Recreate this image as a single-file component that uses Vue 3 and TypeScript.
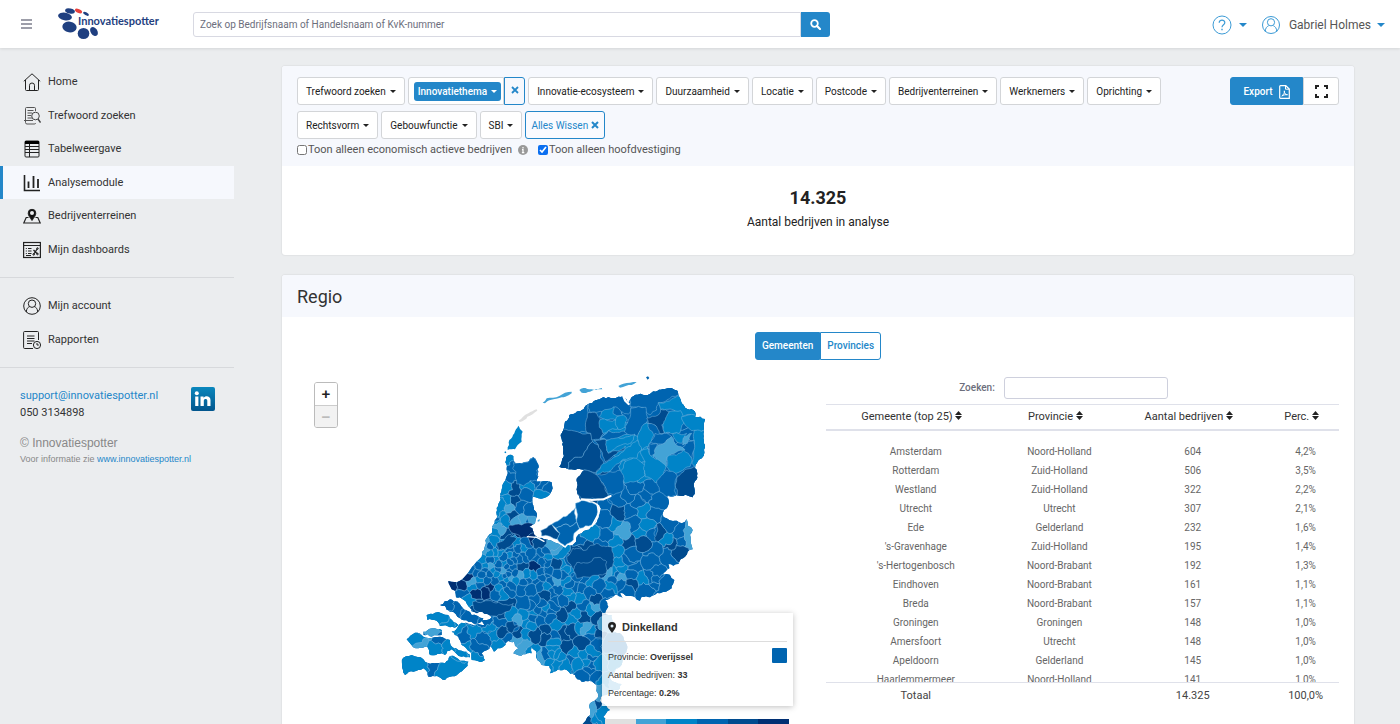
<script setup lang="ts">
import { ref, computed } from 'vue'

type Point = [number, number]
interface Shape { d: string; fill: string }

const palette = ['#e0e0e0', '#43a3d6', '#0084c8', '#0064b0', '#004b8f', '#002f73']

const navMain = [
  { icon: 'home', label: 'Home' },
  { icon: 'search', label: 'Trefwoord zoeken' },
  { icon: 'table', label: 'Tabelweergave' },
  { icon: 'chart', label: 'Analysemodule' },
  { icon: 'pin', label: 'Bedrijventerreinen' },
  { icon: 'board', label: 'Mijn dashboards' },
]
const navAccount = [
  { icon: 'user', label: 'Mijn account' },
  { icon: 'report', label: 'Rapporten' },
]
const filtersAfter = [
  'Innovatie-ecosysteem', 'Duurzaamheid', 'Locatie', 'Postcode', 'Bedrijventerreinen',
  'Werknemers', 'Oprichting', 'Rechtsvorm', 'Gebouwfunctie', 'SBI',
]
const columns = ['Gemeente (top 25)', 'Provincie', 'Aantal bedrijven', 'Perc.']
const allRows = [
  ['Amsterdam', 'Noord-Holland', '604', '4,2%'],
  ['Rotterdam', 'Zuid-Holland', '506', '3,5%'],
  ['Westland', 'Zuid-Holland', '322', '2,2%'],
  ['Utrecht', 'Utrecht', '307', '2,1%'],
  ['Ede', 'Gelderland', '232', '1,6%'],
  ["'s-Gravenhage", 'Zuid-Holland', '195', '1,4%'],
  ["'s-Hertogenbosch", 'Noord-Brabant', '192', '1,3%'],
  ['Eindhoven', 'Noord-Brabant', '161', '1,1%'],
  ['Breda', 'Noord-Brabant', '157', '1,1%'],
  ['Groningen', 'Groningen', '148', '1,0%'],
  ['Amersfoort', 'Utrecht', '148', '1,0%'],
  ['Apeldoorn', 'Gelderland', '145', '1,0%'],
  ['Haarlemmermeer', 'Noord-Holland', '141', '1,0%'],
]

const query = ref('')
const tableQuery = ref('')
const onlyActive = ref(false)
const onlyMain = ref(true)
const rows = computed(() => {
  const q = tableQuery.value.toLowerCase()
  return allRows.filter(r => r[0].toLowerCase().includes(q) || r[1].toLowerCase().includes(q))
})

function parse(s: string): Point[] {
  return s.trim().split(/\s+/).map(p => p.split(',').map(Number) as Point)
}

// Deterministic noise, equal for both municipalities that share an edge.
function noise(a: Point, b: Point): number {
  const v = Math.sin((a[0] + b[0]) * 12.9898 + (a[1] + b[1]) * 78.233) * 43758.5453
  return v - Math.floor(v) - 0.5
}
function roughEdge(a: Point, b: Point, amount: number, out: Point[]): void {
  const len = Math.hypot(b[0] - a[0], b[1] - a[1])
  if (len < 11) { out.push(b); return }
  const flip = a[0] < b[0] || (a[0] === b[0] && a[1] < b[1]) ? 1 : -1
  const n = noise(a, b) * amount * flip
  const mid: Point = [
    Math.round((a[0] + b[0]) / 2 - (b[1] - a[1]) * n),
    Math.round((a[1] + b[1]) / 2 + (b[0] - a[0]) * n),
  ]
  roughEdge(a, mid, amount, out)
  roughEdge(mid, b, amount, out)
}
function roughPath(pts: Point[], amount: number): string {
  const out: Point[] = []
  pts.forEach((p, i) => roughEdge(p, pts[(i + 1) % pts.length], amount, out))
  return 'M' + out.map(p => p.join(' ')).join('L') + 'Z'
}

function cellAround(site: Point, sites: Point[]): Point[] {
  let poly: Point[] = [[0, 0], [1000, 0], [1000, 1230], [0, 1230]]
  for (const o of sites) {
    if (o === site) continue
    const nx = o[0] - site[0]
    const ny = o[1] - site[1]
    const c = (o[0] * o[0] + o[1] * o[1] - site[0] * site[0] - site[1] * site[1]) / 2
    const side = (p: Point) => p[0] * nx + p[1] * ny - c
    const next: Point[] = []
    poly.forEach((p, i) => {
      const q = poly[(i + 1) % poly.length]
      const sp = side(p)
      const sq = side(q)
      if (sp <= 0) next.push(p)
      if ((sp < 0 && sq > 0) || (sp > 0 && sq < 0)) {
        const t = sp / (sp - sq)
        next.push([p[0] + (q[0] - p[0]) * t, p[1] + (q[1] - p[1]) * t])
      }
    })
    poly = next
  }
  return poly.map(p => [Math.round(p[0]), Math.round(p[1])] as Point)
}

const land = [
  '356,255 370,258 374,278 395,280 430,262 447,290 445,320 440,335 485,337 488,355 478,375 460,385 445,385 428,380 432,410 440,440 435,460 418,470 430,485 440,500 470,508 490,515 520,532 548,525 560,500 590,480 622,450 628,405 612,398 575,392 562,372 565,320 583,300 545,298 508,290 515,275 520,240 512,195 520,180 525,155 560,125 595,102 640,82 700,78 715,98 725,82 780,72 825,57 862,62 865,75 875,100 915,125 915,140 945,147 942,180 945,230 935,265 915,295 908,382 860,375 828,380 835,405 820,440 860,452 875,460 890,448 908,480 902,510 908,538 885,560 865,582 835,582 838,595 818,610 853,630 845,655 828,665 810,670 780,682 755,680 750,692 735,682 710,678 690,670 698,685 675,675 660,685 645,690 655,710 645,730 665,735 665,780 700,800 710,840 690,890 660,925 695,942 690,955 650,975 632,980 635,1000 660,1020 640,1040 645,1070 650,1110 600,1130 560,1110 570,1065 600,1035 600,1000 625,980 620,945 575,935 555,915 530,900 480,910 478,888 455,885 440,850 425,830 425,850 400,853 370,850 385,835 372,815 350,815 338,832 312,845 302,828 275,850 285,870 245,870 240,845 215,825 205,800 185,785 215,758 240,762 283,765 275,752 305,742 245,724 232,704 198,682 195,662 185,658 175,633 210,632 220,625 275,560 283,540 305,490 322,440 332,390 340,340 350,300',
  '150,705 180,688 215,710 245,735 280,745 270,758 235,755 210,745 180,725 165,708',
  '110,735 135,728 175,735 190,755 205,765 180,772 150,768 140,752 112,750',
  '100,785 155,780 155,795 125,800 100,795',
  '50,808 75,788 100,800 120,805 150,800 180,810 182,826 215,842 240,854 240,862 215,860 185,838 165,855 120,855 112,830 85,835 60,820',
  '35,870 65,855 100,868 115,880 165,880 180,858 210,872 235,875 225,895 180,920 165,930 115,920 100,895 70,905 45,915 37,895',
]
const landPaths = land.map(s => roughPath(parse(s), 0.35))

const siteList = `690,385,3 740,350,3 780,350,3 715,375,3 765,375,3 800,395,3 745,395,3 640,410,3 685,425,4 720,425,3
760,420,2 795,430,3 650,450,3 668,460,2 695,485,1 730,460,3 770,470,2 755,490,2 785,490,3 814,490,4 840,470,3 865,490,3
830,505,2 845,520,4 870,515,3 899,512,1 865,540,4 835,560,3 605,495,2 645,495,3 575,500,3 630,525,3 680,540,2 678,515,2
715,520,4 760,515,4 725,550,3 790,540,3 590,530,4 620,560,4 560,555,4 600,590,4 640,600,4 650,560,4 580,600,4 540,575,3
690,580,2 715,570,3 730,600,3 785,580,3 670,610,2 690,625,1 655,610,1 780,620,3 800,625,3 725,642,4 690,640,3 760,660,3
795,655,3 830,640,3 710,660,3 660,650,2 650,670,3 505,550,2 480,530,1 455,550,3 450,520,4 440,565,3 468,560,2 490,535,1
500,580,4 530,600,2 520,580,2 545,605,2 435,593,5 395,590,4 455,610,3 470,620,3 500,615,3 495,632,1 390,617,1 410,615,2
375,630,2 440,640,3 400,650,3 350,660,3 340,640,3 465,675,4 500,660,3 540,640,3 580,625,3 605,635,2 625,650,3 570,655,3
540,680,2 570,685,2 600,670,3 620,690,4 615,710,1 645,705,3 520,690,3 300,710,4 260,705,4 350,705,4 400,700,3 450,700,3
490,710,3 540,712,4 580,705,3 365,290,3 410,300,3 345,350,2 362,265,2 355,320,3 375,360,4 410,350,2 430,335,3 460,345,3
472,360,3 455,378,2 405,375,3 375,395,4 350,395,2 355,412,1 335,410,2 330,430,2 395,410,3 420,420,3 365,440,4 400,455,1
425,455,1 385,458,1 345,450,2 330,460,2 395,480,5 350,500,4 325,480,1 315,490,2 375,520,2 360,540,3 330,530,3 310,520,2
300,550,2 290,540,1 280,570,2 300,590,1 285,590,2 265,590,3 315,570,2 340,560,3 370,570,3 350,590,3 320,610,2 300,610,3
235,620,5 215,645,5 190,640,5 250,650,2 270,630,2 300,650,5 285,665,5 260,670,5 275,615,3 290,630,3 245,637,1 220,675,3
240,690,2 410,520,3 430,508,5 400,535,2 420,550,3 400,560,3 365,735,2 335,730,4 400,740,2 430,730,2 410,760,2 385,750,1
330,755,3 290,755,3 250,780,2 220,790,3 280,810,3 315,790,2 300,770,2 340,790,4 370,770,4 385,785,4 350,805,3 330,825,2
380,815,1 400,830,1 410,790,2 435,790,4 465,785,4 450,750,3 480,740,3 515,735,4 545,745,2 580,740,4 500,765,2 470,803,4
490,815,2 520,790,4 550,780,4 585,775,1 600,800,3 575,820,4 530,835,4 490,840,2 550,850,2 510,860,2 455,860,1 480,880,2
530,880,2 560,880,2 600,860,3 630,790,4 625,740,4 625,820,3 600,900,3 580,920,3 620,920,3 650,760,1 660,820,3 670,870,2
640,930,2 690,940,1 630,970,1 620,1000,4 640,1020,2 600,1030,1 620,1045,2 590,1052,4 610,1080,3 230,840,2 265,830,3
260,860,2 205,775,2 80,810,2 90,825,1 130,785,1 150,808,3 140,832,2 170,830,2 210,850,2 70,880,2 140,900,3 200,880,2
150,740,2 170,765,2 200,720,3 240,740,3 165,700,3 540,150,3 620,100,3 770,90,3 800,210,3 740,230,2 830,340,3 660,330,3
740,320,2 620,350,4 600,380,4`
const sites = siteList.trim().split(/\s+/).map(s => s.split(',').map(Number))

// Small municipalities of the Randstad and the river area.
const fillers: [number, number, number, number, number, number[]][] = [
  [280, 520, 110, 110, 22, [3, 2, 3, 3, 2, 1]],
  [240, 590, 120, 80, 12, [3, 2, 3, 3]],
  [390, 540, 170, 130, 18, [3, 3, 2, 3, 3]],
  [400, 690, 240, 60, 10, [3, 2, 3]],
  [400, 760, 230, 140, 16, [2, 3, 2, 2]],
  [640, 590, 180, 70, 6, [3, 3, 2]],
]
let seed = 41
const rnd = () => { seed = (seed * 16807) % 2147483647; return seed / 2147483647 }
for (const [x, y, w, h, n, shades] of fillers) {
  let placed = 0
  for (let tries = 0; tries < 400 && placed < n; tries++) {
    const px = Math.round(x + rnd() * w)
    const py = Math.round(y + rnd() * h)
    const gap = Math.min(...sites.map(s => Math.hypot(s[0] - px, s[1] - py) - (s[2] > 3 ? 11 : 0)))
    if (gap > 11) {
      sites.push([px, py, shades[placed % shades.length]])
      placed++
    }
  }
}
const sitePoints = sites.map(s => [s[0], s[1]] as Point)
const cells: Shape[] = sitePoints.map((p, i) => ({
  d: roughPath(cellAround(p, sitePoints), 0.55),
  fill: palette[sites[i][2]],
}))

const northList: [number, string][] = [
  [3, '500,150 560,120 595,95 597,150 590,187 560,188 520,180'],
  [3, '595,95 640,72 700,70 725,110 715,132 675,110 640,125 600,127'],
  [4, '500,180 570,188 602,190 608,215 575,262 555,262 535,278 532,305 500,300'],
  [4, '608,215 632,240 642,280 617,308 585,300 532,300 535,278 555,262 575,262'],
  [4, '595,127 620,130 632,165 640,190 628,208 605,210 602,190 590,187'],
  [4, '612,212 648,208 655,250 706,228 700,242 645,275 632,240'],
  [2, '635,125 672,110 670,132 690,138 678,150 645,150 628,140'],
  [2, '632,148 678,150 682,178 655,182 640,190 628,172'],
  [2, '680,140 700,135 712,150 705,172 684,178 676,155'],
  [3, '710,60 780,62 825,47 872,55 865,75 830,90 805,98 800,120 780,135 760,112 720,110'],
  [3, '722,115 768,112 775,150 755,175 745,200 702,190 715,150'],
  [4, '770,145 805,135 812,118 838,125 832,150 815,165 822,190 808,190 795,165 775,160'],
  [2, '805,98 865,75 880,95 925,120 920,138 875,140 855,122 812,118'],
  [2, '838,125 872,122 882,160 870,188 825,190 818,165'],
  [2, '875,140 915,135 955,140 950,180 905,182 885,165'],
  [2, '912,182 955,180 955,230 945,270 915,300 905,280 912,230'],
  [3, '875,235 890,215 912,210 912,240 905,265'],
  [2, '848,190 890,190 880,205 875,220 860,215'],
  [1, '880,205 905,190 892,220 878,225'],
  [3, '795,190 822,190 845,200 820,222 803,222 778,215'],
  [1, '790,255 805,225 845,200 885,240 832,260 828,290 805,275'],
  [2, '832,260 880,240 905,265 900,290 870,305 845,310 830,290'],
  [4, '862,320 912,290 925,300 918,390 862,376 855,345'],
  [2, '755,170 772,158 792,195 775,230 755,240 742,205'],
  [3, '778,220 803,222 795,250 775,262'],
  [3, '632,205 655,182 700,183 712,192 680,207 650,210'],
  [2, '648,212 690,205 735,192 730,210 655,248 650,235'],
  [2, '617,312 640,280 700,245 742,210 755,240 738,268 700,268 660,303'],
  [2, '690,310 705,275 740,265 768,285 765,315 705,340'],
  [2, '765,275 750,245 775,235 785,260 828,290 820,320 795,338 765,320'],
  [3, '800,340 828,300 862,318 855,345 860,378 828,380 808,365'],
  [3, '617,313 660,305 690,300 700,335 702,355 670,375 652,372 645,350'],
  [4, '560,320 583,300 615,312 645,350 655,378 640,392 575,390 555,365'],
]
const centreList: [number, string][] = [
  [3, '370,278 395,280 430,262 447,290 447,335 420,332 400,348 380,342 378,305 368,295'],
  [4, '350,498 372,482 362,500 380,505 360,530 325,542 320,520 340,512'],
  [5, '358,465 432,465 440,478 420,492 412,503 392,505 378,492 362,485'],
  [4, '548,535 590,540 620,520 665,530 672,575 655,600 600,600 560,610 545,590 530,560'],
  [4, '560,578 610,565 650,575 648,610 600,622 560,625 550,600'],
  [4, '248,695 310,697 370,700 350,725 300,738 255,722'],
]
const toShape = (rough: number) => ([c, s]: [number, string]): Shape => ({ d: roughPath(parse(s), rough), fill: palette[c] })
const north = northList.map(toShape(0.28))
const centre = centreList.map(toShape(0.4))

const polderList: [number, string][] = [
  [4, '452,482 485,463 510,490 502,507 455,498'],
  [3, '485,463 520,440 557,412 560,455 540,470 528,462 498,475'],
  [3, '557,400 575,392 600,398 622,408 622,440 605,465 570,475 560,455'],
  [3, '498,475 528,462 540,470 560,457 568,476 552,490 550,510 525,528 502,507 510,490'],
]
const polder = polderList.map(toShape(0.22))
const polderEdge = roughPath(parse('452,482 485,463 520,440 557,400 575,392 600,398 622,408 622,440 605,465 568,476 552,490 550,510 525,528 502,507 455,498'), 0.22)

const islandList: [number, string][] = [
  [2, '385,167 398,185 395,215 375,238 353,240 358,210'],
  [0, '385,152 415,130 440,118 442,122 412,140 390,156'],
  [1, '458,98 470,85 545,65 545,70 505,85 465,100'],
  [1, '568,60 580,54 605,58 635,54 637,58 600,65 575,68'],
  [1, '685,48 700,41 740,36 725,45 690,53'],
  [3, '768,22 774,19 778,24 773,29'],
  [2, '343,246 347,244 349,248 345,250'],
  [1, '443,450 450,448 448,454 443,455'],
]
const islands = islandList.map(toShape(0.25))
</script>

<template>
  <div class="app">
    <header class="topbar">
      <button class="plain burger" aria-label="Menu">
        <svg width="11" height="10" viewBox="0 0 11 10"><path d="M0 1h11M0 5h11M0 9h11" stroke="#7d7f8d" stroke-width="1.4" /></svg>
      </button>
      <a class="logo" href="#" aria-label="Innovatiespotter">
        <svg width="120" height="34" viewBox="0 0 120 34">
          <g fill="#1f3f80">
            <ellipse cx="8" cy="9.5" rx="7" ry="3.8" transform="rotate(10 8 9.500)" />
            <ellipse cx="13" cy="4" rx="5" ry="2.500" transform="rotate(12 13 4)" />
            <ellipse cx="29" cy="6.800" rx="3.200" ry="1.500" transform="rotate(28 29 6.800)" />
            <ellipse cx="12.500" cy="20" rx="7.200" ry="5.400" transform="rotate(8 12.500 20)" />
            <ellipse cx="26.500" cy="26.500" rx="5.800" ry="5.600" />
            <ellipse cx="37" cy="24.500" rx="4.900" ry="3.300" transform="rotate(55 37 24.500)" />
          </g>
          <ellipse cx="21.500" cy="4" rx="3.800" ry="1.800" fill="#e8413c" transform="rotate(24 21.500 4)" />
          <text x="21" y="18" class="logo-text">Innovatiespotter</text>
        </svg>
      </a>
      <form class="search" @submit.prevent>
        <input v-model="query" type="text" aria-label="Zoeken" placeholder="Zoek op Bedrijfsnaam of Handelsnaam of KvK-nummer">
        <button aria-label="Zoek">
          <svg width="11" height="11" viewBox="0 0 11 11" fill="none" stroke="#fff"><circle cx="4.500" cy="4.500" r="3.300" stroke-width="1.800" /><path d="M7 7l3 3" stroke-width="2.200" stroke-linecap="round" /></svg>
        </button>
      </form>
      <div class="account">
        <button class="plain" aria-label="Help">
          <svg width="20" height="20" viewBox="0 0 20 20" fill="none" stroke="#3c9bd6"><circle cx="10" cy="10" r="9" /><path d="M7.200 7.800c0-3.600 5.600-3.600 5.600 0 0 2-2.800 2-2.800 4.400" stroke-width="1.200" /><path d="M10 13.800v1.400" stroke-width="1.400" /></svg>
          <span class="caret blue"></span>
        </button>
        <button class="plain user">
          <svg width="20" height="20" viewBox="0 0 20 20" fill="none" stroke="#3c9bd6"><circle cx="10" cy="10" r="8.500" /><circle cx="10" cy="7.300" r="3.600" /><path d="M4.200 16.600c.2-3.600 1.600-5 3.400-5.800M15.800 16.600c-.2-3.600-1.600-5-3.400-5.800" /></svg>
          <span class="name">Gabriel Holmes</span>
          <span class="caret blue"></span>
        </button>
      </div>
    </header>

    <div class="shell">
      <aside class="sidebar">
        <nav v-for="(group, g) in [navMain, navAccount]" :key="g">
          <a v-for="item in group" :key="item.label" href="#" :class="{ active: item.label === 'Analysemodule' }">
            <svg width="18" height="18" viewBox="0 0 18 18" fill="none" stroke="#222" stroke-width="1">
              <template v-if="item.icon === 'home'">
                <path d="M.8 8.300 9 .8l8.200 7.500M2.500 7v9.500q0 1 1 1h11q1 0 1-1V7" /><path d="M6.500 17.300v-5q0-2.300 2.500-2.300t2.500 2.300v5" />
              </template>
              <template v-else-if="item.icon === 'search'">
                <path d="M12.500 4V1.500q0-1-1-1h-8q-1 0-1 1v14q0 1.500 1.500 1.500h7.500q1 0 1-1M4.500 3.500h6M4.500 6H9M4.500 8.500H8M4.500 11H9M1 13.500h9" stroke="#555" /><circle cx="12.500" cy="9" r="3.800" stroke="#444" /><path d="M15 12l2.500 3.500" stroke="#444" stroke-width="1.400" />
              </template>
              <template v-else-if="item.icon === 'table'">
                <rect x="2" y="1" width="14" height="16" rx="1" /><path d="M2 2.500h14" stroke-width="3" stroke="#000" /><path d="M2 6.500h14M2 9.500h14M2 12.500h14M6.500 4v13" />
              </template>
              <template v-else-if="item.icon === 'chart'">
                <path d="M1.500 1v15.500H17" stroke-width="1.600" /><path d="M5.500 7.500v6.500M10.500 2v12M15 5v9" stroke-width="1.800" />
              </template>
              <template v-else-if="item.icon === 'pin'">
                <path d="M5.500 10.500H3.200L.8 16h16.400l-2.400-5.500h-2.300" stroke-width="1.200" /><path d="M9 13.500C7 10.500 5.200 8.500 5.200 6.100a3.800 3.800 0 0 1 7.600 0C12.800 8.500 11 10.500 9 13.500z" fill="#111" /><circle cx="9" cy="6" r="2" fill="#ebedef" stroke="none" />
              </template>
              <template v-else-if="item.icon === 'board'">
                <rect x=".6" y="1.500" width="16.800" height="15" stroke-width="1.200" /><path d="M.6 4.500h16.800" /><path d="M2.800 7.500h1M2.800 10h1M2.800 12.500h1M5 7.500h3.500M5 10h3.500M5 12.500h3.500M3 14.500h5" stroke-width="1.200" /><path d="M10.500 13.500l4-6M10.500 9l4 4" stroke-width="1.300" /><circle cx="14.500" cy="7.500" r=".8" /><circle cx="10.700" cy="13.400" r=".8" /><circle cx="14.500" cy="13" r=".8" />
              </template>
              <template v-else-if="item.icon === 'user'">
                <circle cx="9" cy="9" r="8.300" /><circle cx="9" cy="6.700" r="3.700" /><path d="M3.300 15c.2-3.500 1.500-4.500 3.300-5.400M14.700 15c-.2-3.500-1.500-4.500-3.300-5.400" />
              </template>
              <template v-else>
                <path d="M15.500 9V1.500q0-1-1-1H1.600q-1 0-1 1v15q0 1 1 1H10" /><path d="M4 5h7.500M4 7.500h7.500M4 10h7.500M4 12.500h5" /><circle cx="14" cy="14" r="3.600" /><path d="M14 12v2h1.800" />
              </template>
            </svg>
            <span>{{ item.label }}</span>
          </a>
        </nav>
        <div class="contact">
          <div>
            <a href="#">support@innovatiespotter.nl</a>
            <p>050 3134898</p>
          </div>
          <a class="linkedin" href="#" aria-label="LinkedIn">
            <svg width="24" height="24" viewBox="0 0 24 24">
              <defs><linearGradient id="li" x2="0" y2="1"><stop stop-color="#0a87bd" /><stop offset="1" stop-color="#01558d" /></linearGradient></defs>
              <rect width="24" height="24" rx="2" fill="url(#li)" /><circle cx="5.800" cy="6.300" r="2" fill="#fff" /><path d="M4.200 9.500h3.200V19H4.200zM9.500 9.500h3v1.300c1.800-2.600 7-2 7 2.200v6h-3.200v-5.200c0-2.600-3.500-2.500-3.500 0V19H9.500z" fill="#fff" />
            </svg>
          </a>
        </div>
        <div class="copyright">
          <p>© Innovatiespotter</p>
          <small>Voor informatie zie <a href="#">www.innovatiespotter.nl</a></small>
        </div>
      </aside>

      <main>
        <section class="card">
          <div class="filterbar">
            <div class="filters">
              <button class="btn">Trefwoord zoeken<span class="caret"></span></button>
              <div class="split">
                <button class="btn theme"><span class="pill">Innovatiethema<span class="caret"></span></span></button>
                <button class="btn clear" aria-label="Wis innovatiethema">
                  <svg width="8" height="8" viewBox="0 0 8 8"><path d="M1 1l6 6M7 1l-6 6" stroke="#2487c9" stroke-width="1.800" /></svg>
                </button>
              </div>
              <button v-for="f in filtersAfter" :key="f" class="btn">{{ f }}<span class="caret"></span></button>
              <button class="btn wipe">Alles Wissen
                <svg width="8" height="8" viewBox="0 0 8 8"><path d="M1 1l6 6M7 1l-6 6" stroke="#2487c9" stroke-width="2" /></svg>
              </button>
            </div>
            <div class="tools">
              <button class="btn export">Export
                <svg width="11" height="14" viewBox="0 0 11 14" fill="none" stroke="#fff"><path d="M1.500.7h5.300L10.300 4v9.300H1.500q-.8 0-.8-.8V1.500q0-.8.8-.8z" stroke-width="1.200" /><path d="M6.500 1v3.200H10M2.800 11c2-1.500 3-3.500 2.500-5.200 0 3 1.500 4 3.200 3.900-2-.2-4 .3-5.700 1.300" /></svg>
              </button>
              <button class="btn full" aria-label="Volledig scherm">
                <svg width="13" height="13" viewBox="0 0 13 13"><path d="M1 4V1h3M9 1h3v3M12 9v3H9M4 12H1V9" fill="none" stroke="#222" stroke-width="2" /></svg>
              </button>
            </div>
          </div>
          <div class="checks">
            <label><input v-model="onlyActive" type="checkbox">Toon alleen economisch actieve bedrijven</label>
            <svg width="10" height="10" viewBox="0 0 10 10"><circle cx="5" cy="5" r="5" fill="#999" /><path d="M5 2v1.400M4 4.700h1v2.800M3.900 7.600h2.400" stroke="#fff" stroke-width="1.200" fill="none" /></svg>
            <label><input v-model="onlyMain" type="checkbox">Toon alleen hoofdvestiging</label>
          </div>
          <div class="total">
            <strong>14.325</strong>
            <span>Aantal bedrijven in analyse</span>
          </div>
        </section>

        <section class="card region">
          <h2>Regio</h2>
          <div class="toggle">
            <button class="on">Gemeenten</button><button>Provincies</button>
          </div>
          <div class="columns">
            <div class="map">
              <svg class="land" viewBox="-279 18 1539 1200">
                <defs>
                  <clipPath id="coast"><path v-for="(d, i) in landPaths" :key="i" :d="d" /></clipPath>
                </defs>
                <g clip-path="url(#coast)" stroke="#7ab8e0" stroke-width="1.500" stroke-linejoin="round">
                  <rect width="1000" height="1230" :fill="palette[3]" />
                  <path v-for="(c, i) in cells" :key="'c' + i" :d="c.d" :fill="c.fill" />
                  <path v-for="(c, i) in centre" :key="'m' + i" :d="c.d" :fill="c.fill" />
                  <path v-for="(c, i) in north" :key="'n' + i" :d="c.d" :fill="c.fill" />
                </g>
                <path :d="polderEdge" fill="#fff" stroke="#fff" stroke-width="9" />
                <g stroke="#7ab8e0" stroke-width="1.500">
                  <path v-for="(c, i) in polder" :key="'p' + i" :d="c.d" :fill="c.fill" />
                </g>
                <g stroke="none">
                  <path v-for="(c, i) in islands" :key="'i' + i" :d="c.d" :fill="c.fill" />
                </g>
                <g fill="none" stroke="#fff" stroke-linecap="round" stroke-linejoin="round">
                  <path d="M575 388 L605 390 L640 388 L662 378" stroke-width="6" />
                  <path d="M622 404 L626 430 L606 468" stroke-width="5" />
                  <path d="M700 78 L706 92 L716 102" stroke-width="7" />
                  <path d="M412 500 L440 502 L462 514" stroke-width="4" />
                </g>
              </svg>
              <div class="zoom">
                <button aria-label="Inzoomen">+</button>
                <button aria-label="Uitzoomen" disabled>−</button>
              </div>
              <div class="legend">
                <span v-for="c in palette" :key="c" :style="{ background: c }"></span>
              </div>
              <div class="tip">
                <h3>
                  <svg width="8" height="11" viewBox="0 0 8 11"><path fill-rule="evenodd" d="M4 11C2 8 0 6.200 0 4a4 4 0 0 1 8 0c0 2.200-2 4-4 7zM4 2.500a1.500 1.500 0 1 0 0 3 1.500 1.500 0 0 0 0-3z" fill="#222" /></svg>
                  Dinkelland
                </h3>
                <div class="tip-body">
                  <div>
                    <p>Provincie: <b>Overijssel</b></p>
                    <p>Aantal bedrijven: <b>33</b></p>
                    <p>Percentage: <b>0.2%</b></p>
                  </div>
                  <i></i>
                </div>
              </div>
            </div>

            <div class="data">
              <div class="find">
                <label for="table-search">Zoeken:</label>
                <input id="table-search" v-model="tableQuery" type="text">
              </div>
              <div class="scroll">
                <table>
                  <colgroup><col class="c1"><col class="c2"><col class="c3"><col class="c4"></colgroup>
                  <thead>
                    <tr>
                      <th v-for="c in columns" :key="c" scope="col">{{ c }}
                        <svg width="7" height="9" viewBox="0 0 7 9"><path d="M0 4h7L3.500 0zM0 5h7L3.500 9z" fill="#222" /></svg>
                      </th>
                    </tr>
                  </thead>
                  <tbody>
                    <tr v-for="r in rows" :key="r[0]"><td v-for="(v, i) in r" :key="i">{{ v }}</td></tr>
                  </tbody>
                </table>
              </div>
              <table class="sum">
                <colgroup><col class="c1"><col class="c2"><col class="c3"><col class="c4"></colgroup>
                <tbody><tr><td>Totaal</td><td></td><td>14.325</td><td>100,0%</td></tr></tbody>
              </table>
            </div>
          </div>
        </section>
      </main>
    </div>
  </div>
</template>

<style>
html, body { background: #ebedef; }
body { height: 100vh; overflow: hidden; }
</style>

<style scoped>
* { box-sizing: border-box; }
.app { height: 100vh; overflow: hidden; background: #ebedef; color: #333; font: 11px/16px Roboto, "Liberation Sans", sans-serif; }
p, h2, h3 { margin: 0; font-weight: 400; }
a { color: #2487c9; text-decoration: none; }
button, input { font: inherit; color: inherit; margin: 0; }
button { cursor: pointer; }
.plain { border: 0; background: none; padding: 0; display: flex; align-items: center; }
.caret { display: inline-block; margin-left: 4px; border: 3px solid transparent; border-top-color: currentColor; border-bottom: 0; vertical-align: 2px; }
.caret.blue { border-width: 4px 4px 0; color: #2487c9; margin-left: 7px; }

.topbar { position: relative; display: flex; align-items: center; height: 48px; padding: 0 15px 0 21px; background: #fff; box-shadow: 0 1px 3px rgba(0, 0, 0, 0.1); }
.burger { width: 36px; height: 24px; }
.logo { display: flex; width: 136px; }
.logo-text { font: 700 11px Lato, sans-serif; fill: #1f3f80; }
.search { display: flex; width: 637px; height: 25px; }
.search input { flex: 1; min-width: 0; border: 1px solid #d8d9e2; border-radius: 3px 0 0 3px; padding: 1px 6px 0; outline: 0; font-size: 10px; }
.search input::placeholder { color: #6c6e7c; opacity: 1; }
.search button { width: 29px; border: 0; border-radius: 0 3px 3px 0; background: #2487c9; padding: 0; display: grid; place-items: center; }
.account { display: flex; gap: 14px; margin-left: auto; padding-top: 1px; }
.user { color: #555; font-size: 12px; }
.name { margin-left: 8px; }
.user .caret { margin-left: 6px; }

.shell { display: flex; align-items: flex-start; }
.sidebar { width: 234px; flex: none; padding-top: 17px; }
nav { padding-bottom: 11px; margin-bottom: 11px; border-bottom: 1px solid #d7d9dc; }
nav a { display: flex; align-items: center; gap: 7px; height: 34px; padding-left: 20px; border-left: 3px solid transparent; color: #333; }
nav a:nth-child(2n) { height: 33px; }
nav a.active { background: #f6f8fd; border-left-color: #2487c9; }
.contact { display: flex; justify-content: space-between; padding: 8px 19px 0 20px; }
.contact a, .contact p { position: static; line-height: 17px; }
.contact p { color: #333; }
.linkedin { display: flex; }
.copyright { padding: 14px 20px; color: #888; font: 12px/16px "Liberation Sans", sans-serif; }
.copyright small { font-size: 9px; display: block; }

main { flex: 1; min-width: 0; padding: 18px 46px 0 48px; }
.card { background: #fff; border-radius: 3px; box-shadow: 0 0 2px rgba(0, 0, 0, 0.14); margin-bottom: 20px; overflow: hidden; }
.filterbar { display: flex; align-items: flex-start; justify-content: space-between; gap: 60px; background: #f6f8fd; padding: 11px 15px 0; }
.filters { display: flex; flex-wrap: wrap; gap: 6px 3px; }
.btn { height: 28px; border: 1px solid #d3d5d8; border-radius: 3px; background: #fff; padding: 1px 8px 0; white-space: nowrap; color: #222; font-size: 10px; }
.split, .tools { display: flex; }
.theme { padding: 0 2px 0 5px; border-radius: 3px 0 0 3px; }
.pill { display: block; height: 19px; line-height: 19px; border-radius: 3px; background: #2487c9; color: #fff; padding: 0 4px; font-weight: 500; }
.clear { width: 21px; padding: 0; border-color: #2487c9; border-radius: 0 3px 3px 0; background: #f6f8fd; }
.wipe { border-color: #2487c9; color: #2487c9; padding: 1px 5px 0; background: #f9fafe; }
.tools { flex: none; }
.export { display: flex; align-items: center; gap: 6px; width: 73px; justify-content: center; background: #2487c9; border-color: #2487c9; color: #fff; border-radius: 3px 0 0 3px; font-weight: 500; }
.full { width: 36px; padding: 0; border-radius: 0 3px 3px 0; display: grid; place-items: center; }
.checks { display: flex; align-items: center; background: #f6f8fd; padding: 3px 15px 8px; color: #555; }
.checks svg { margin: 0 10px 0 6px; }
.checks label { display: flex; align-items: center; gap: 1px; }
.checks input { width: 10px; height: 10px; accent-color: #0b6ff0; }
.total { display: flex; flex-direction: column; align-items: center; padding: 22px 0 25px; gap: 6px; color: #222; }
.total strong { font-size: 18px; line-height: 20px; }
.total span { font-size: 12px; line-height: 16px; }

h2 { background: #f6f8fd; font-size: 18px; line-height: 40px; padding: 2px 15px 0; color: #333; }
.toggle { display: flex; justify-content: center; padding: 15px 0 16px; }
.toggle button { height: 28px; border: 1px solid #2487c9; background: #fff; color: #2487c9; padding: 0 6px; border-radius: 0 3px 3px 0; font-size: 10px; font-weight: 500; }
.toggle .on { background: #2487c9; color: #fff; border-radius: 3px 0 0 3px; }
.columns { display: grid; grid-template-columns: 1fr 1fr; gap: 16px; padding: 0 15px 30px; }
.map { position: relative; min-width: 0; }
.land { display: block; width: 100%; }
.zoom { position: absolute; left: 17px; top: 6px; border: 1px solid #bbb; border-radius: 3px; overflow: hidden; width: 24px; }
.zoom button { display: block; width: 100%; height: 22px; border: 0; padding: 0; background: #fff; font: 700 15px/22px "Liberation Sans", sans-serif; color: #222; }
.zoom button + button { border-top: 1px solid #ccc; background: #f2f2f2; color: #bbb; }
.legend { position: absolute; left: 308px; top: 343px; display: grid; grid-template-columns: repeat(6, 1fr); width: 184px; height: 12px; }
.tip { position: absolute; left: 305px; top: 237px; width: 191px; height: 93px; padding: 0 6px; background: rgba(255, 255, 255, 0.82); box-shadow: 0 1px 6px rgba(0, 0, 0, 0.25); font: 9px/18px "Liberation Sans", sans-serif; color: #333; }
.tip h3 { display: flex; align-items: center; gap: 6px; font-size: 11px; font-weight: 700; line-height: 28px; border-bottom: 1px solid #ddd; }
.tip-body { display: flex; justify-content: space-between; padding-top: 6px; }
.tip-body i { width: 15px; height: 15px; background: #0064b0; border-radius: 1px; }

.data { min-width: 0; padding-top: 1px; }
.find { display: flex; align-items: center; justify-content: center; gap: 9px; height: 22px; margin-bottom: 5px; color: #6c6e7c; padding-right: 38px; }
.find label { font-size: 10px; font-weight: 500; }
.find input { width: 164px; height: 22px; border: 1px solid #ced0dd; border-radius: 3px; padding: 0 6px; background: #fff; }
.scroll { height: 278px; overflow: hidden; border-top: 1px solid #dfe1ea; }
table { width: 100%; table-layout: fixed; border-collapse: separate; border-spacing: 0; color: #666; text-align: center; }
.c1 { width: 35%; }
.c2 { width: 21%; }
.c3 { width: 31%; }
.c4 { width: 13%; }
th { height: 26px; padding: 0 8px 0 0; font-weight: 400; color: #333; border-bottom: 2px solid #dfe1ea; white-space: nowrap; }
td { height: 19px; padding: 0; line-height: 19px; font-size: 10px; }
.scroll tbody::before { content: ""; display: block; height: 11px; }
.sum { border-top: 1px solid #dfe1ea; }
.sum td { height: 24px; color: #444; font-size: 11px; }
</style>
